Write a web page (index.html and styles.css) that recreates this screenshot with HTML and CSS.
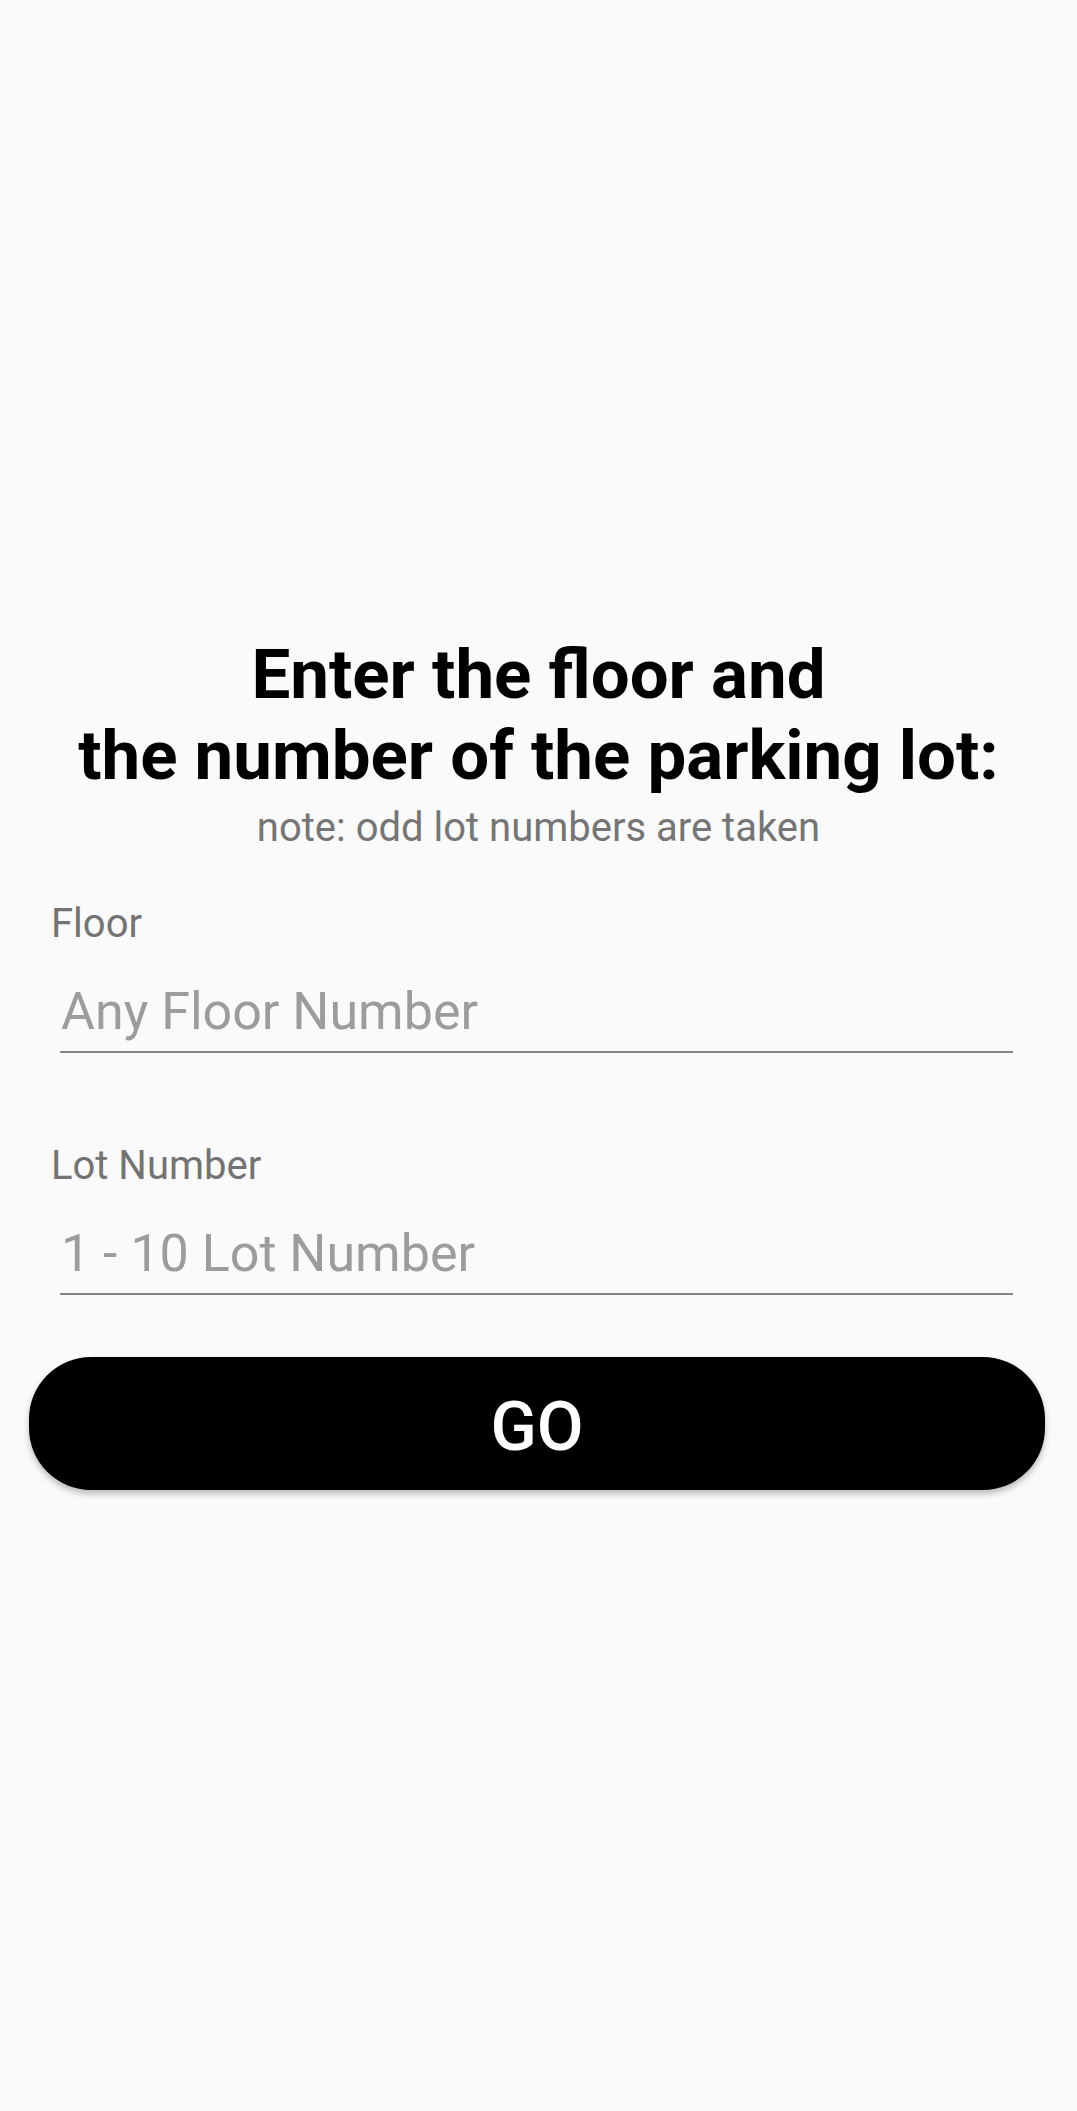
FILE: index.html
```html
<!DOCTYPE html>
<html lang="en">
<head>
    <meta charset="UTF-8">
    <meta name="viewport" content="width=device-width, initial-scale=1.0">
    <title>Parking Lot</title>
    <link rel="stylesheet" href="styles.css">
</head>
<body>
    <div class="parking-form">
        <h1 class="title">Enter the floor and<br>the number of the parking lot:</h1>
        <p class="note">note: odd lot numbers are taken</p>

        <!-- floor field -->
        <label class="field-label" for="floor">Floor</label>
        <input class="field-input" id="floor" type="text" placeholder="Any Floor Number">

        <!-- lot field -->
        <label class="field-label lot-label" for="lot">Lot Number</label>
        <input class="field-input" id="lot" type="text" placeholder="1 - 10 Lot Number">

        <button class="go-button">GO</button>
    </div>
</body>
</html>
```

FILE: styles.css
```css
html, body {
    margin: 0;
    background-color: #fafafa;
    font-family: Roboto, "Liberation Sans", sans-serif;
}

body {
    min-height: 100vh;
}

.parking-form {
    display: flex;
    flex-direction: column;
    padding-top: 634px;
}

.title {
    margin: 0;
    text-align: center;
    font-size: 69px;
    font-weight: 700;
    line-height: 81px;
    color: #000;
}

.note {
    margin: 8px 0 0;
    text-align: center;
    font-size: 40px;
    line-height: 47px;
    color: #757575;
}

.field-label {
    margin: 49px 0 0 51px;
    font-size: 40px;
    line-height: 47px;
    color: #737373;
}

.lot-label {
    margin-top: 89px;
}

.field-input {
    margin: 34px 0 0 60px;
    width: 952px;
    height: 61px;
    padding: 0 0 9px 1px;
    box-sizing: content-box;
    border: none;
    border-bottom: 2px solid #858585;
    background: transparent;
    font-family: Roboto, "Liberation Sans", sans-serif;
    font-size: 52px;
    line-height: 61px;
    color: #222;
    outline: none;
}

.field-input::placeholder {
    color: #9c9c9c;
}

.go-button {
    margin: 62px 0 0 29px;
    width: 1016px;
    height: 133px;
    padding: 8px 0 0;
    border: none;
    border-radius: 62px;
    background-color: #000;
    color: #fff;
    font-family: Roboto, "Liberation Sans", sans-serif;
    font-size: 68px;
    font-weight: 500;
    line-height: 125px;
    box-shadow: 0 4px 6px rgba(0, 0, 0, 0.25);
    cursor: pointer;
}
```
